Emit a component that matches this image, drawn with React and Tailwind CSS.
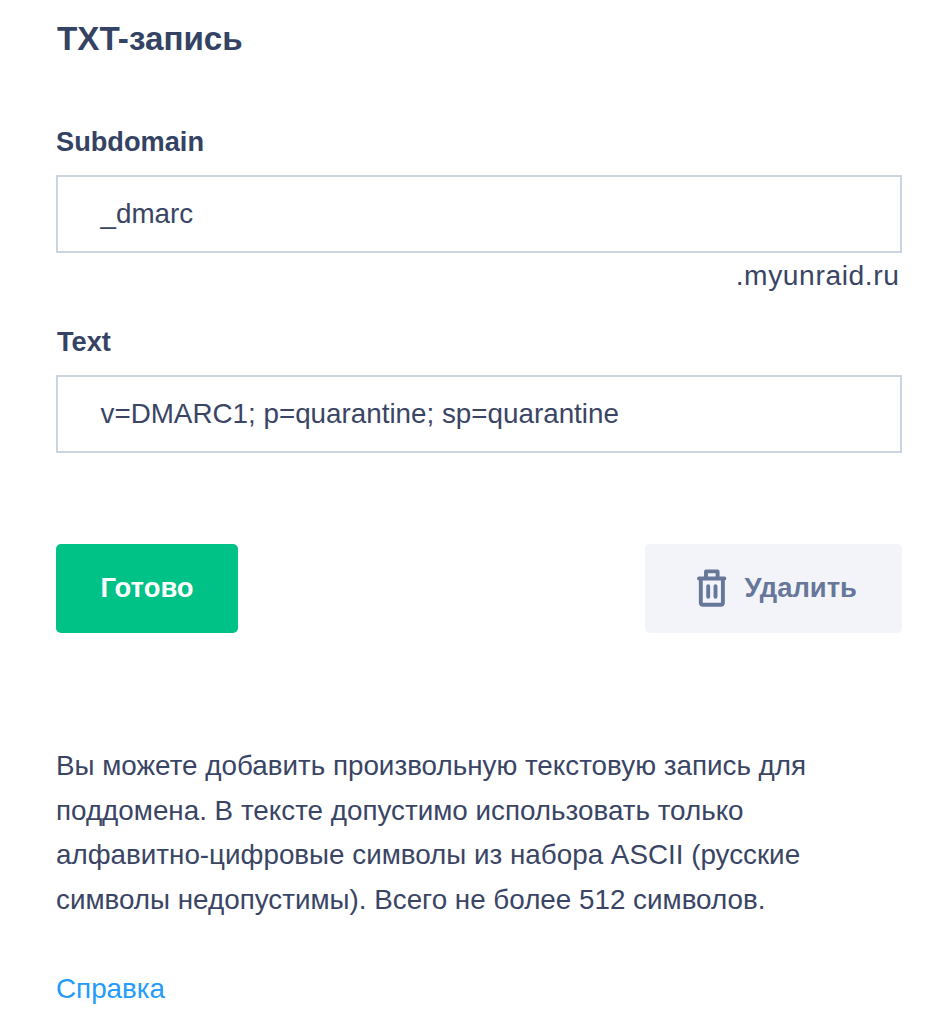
export default function App() {
  return (
    <main className="h-[1024px] w-[948px] overflow-hidden bg-white px-14 pt-[19px] font-['Liberation_Sans',Arial,sans-serif] text-[27.8px] text-[#3a4565]">
      <h1 className="h-[40px] pl-px text-[33.2px] leading-[40px] font-bold whitespace-nowrap text-[#344364]">TXT-запись</h1>
      <form className="w-[846px]">
        <label className="mt-[67px] block h-[32px] text-[27.2px] leading-[32px] font-bold text-[#344364]">Subdomain</label>
        <div className="mt-[17px] flex h-[78px] items-center border-2 border-[#cbd4e1] pl-[42.5px] whitespace-nowrap">_dmarc</div>
        <div className="flex h-[44px] items-center justify-end pr-[2.5px] text-[28.2px] tracking-[0.6px] whitespace-nowrap">.myunraid.ru</div>
        <label className="mt-[29px] block h-[32px] pl-px text-[27.2px] leading-[32px] font-bold text-[#344364]">Text</label>
        <div className="mt-[17px] flex h-[78px] items-center border-2 border-[#cbd4e1] pl-[42.5px] whitespace-nowrap">v=DMARC1; p=quarantine; sp=quarantine</div>
        <div className="mt-[90.5px] flex justify-between text-[27.4px] font-bold">
          <button type="button" className="h-[89px] w-[182px] rounded-[5px] bg-[#00c186] text-white">Готово</button>
          <button type="button" className="flex h-[89px] w-[257px] items-center rounded-[5px] bg-[#f2f4fa] pl-[52px] text-[#667799]">
            <svg className="mb-px h-[38px] w-[30px]" viewBox="0 0 30 38" fill="none" stroke="currentColor" strokeWidth="3.9" strokeLinecap="round" strokeLinejoin="round">
              <path d="M2 9.5H27.4M9 9V2.4H20.6V9M3.8 9.5V33.4Q3.8 35.7 6.1 35.7H23.6Q25.9 35.7 25.9 33.4V9.5" />
              <path d="M11.2 17.3V27.8M18.5 17.3V27.8" />
            </svg>
            <span className="ml-[17.5px]">Удалить</span>
          </button>
        </div>
      </form>
      <p className="mt-[111.5px] text-[27.8px] leading-[44.6px] whitespace-nowrap">
        Вы можете добавить произвольную текстовую запись для<br />поддомена. В тексте допустимо использовать только<br />алфавитно-цифровые символы из набора ASCII (русские<br />символы недопустимы). Всего не более 512 символов.
      </p>
      <a className="mt-[44px] block leading-[45px] text-[#259bfa]">Справка</a>
    </main>
  );
}
